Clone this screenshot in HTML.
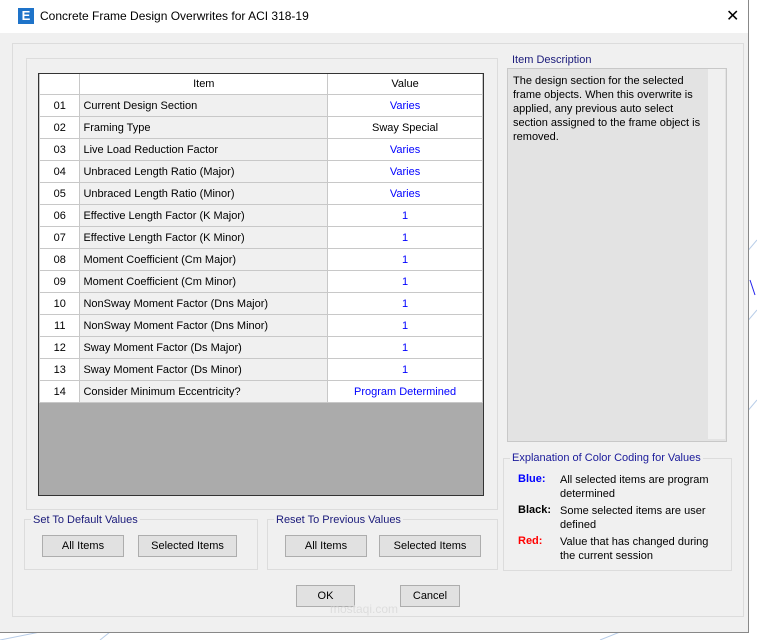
<!DOCTYPE html><html><head><style>
body{margin:0;width:757px;height:640px;overflow:hidden;background:#fff;font-family:"Liberation Sans",sans-serif;font-size:11px;position:relative}
.a{position:absolute}
.dlg{left:0;top:0;width:748px;height:632px;background:#f0f0f0;border-right:1px solid #888;border-bottom:1px solid #888}
.title{left:0;top:0;width:748px;height:33px;background:#fff}
.grp{border:1px solid #dcdcdc}
.btn{background:#e1e1e1;border:1px solid #adadad;text-align:center;line-height:20px;font-size:11px;height:20px}
table{border-collapse:collapse;font-size:11px}
td{border:1px solid #c8c8c8;height:21px;padding:0 3px;white-space:nowrap}
td.n{text-align:center;background:#fff;width:34px}
td.i{background:#f0f0f0;width:242px}
td.v{text-align:center;background:#fff;width:149px}
.b{color:#00f}
.lbl{background:#f0f0f0;padding:0 2px;font-size:11px}
</style></head><body>
<svg class="a" style="left:0;top:0" width="757" height="640"><g stroke="#b8cde8" stroke-width="1"><line x1="740" y1="260" x2="757" y2="240"/><line x1="740" y1="330" x2="757" y2="310"/><line x1="740" y1="420" x2="757" y2="400"/><line x1="0" y1="640" x2="40" y2="632"/><line x1="100" y1="640" x2="110" y2="632"/><line x1="600" y1="640" x2="620" y2="632"/></g><line x1="750" y1="280" x2="755" y2="295" stroke="#22e" /></svg>
<div class="a dlg"></div>
<div class="a title"></div>
<div class="a" style="left:18px;top:8px;width:16px;height:16px;background:#1e73c9;color:#fff;font-weight:bold;font-size:13px;text-align:center;line-height:16px">E</div>
<div class="a" style="left:40px;top:9px;font-size:12px;color:#000">Concrete Frame Design Overwrites for ACI 318-19</div>
<div class="a" style="left:726px;top:6px;font-size:16px">✕</div>
<div class="a grp" style="left:12px;top:43px;width:730px;height:572px"></div>
<div class="a grp" style="left:26px;top:58px;width:470px;height:450px"></div>
<div class="a" style="left:38px;top:73px;width:444px;height:421px;background:#ababab;border:1px solid #333;overflow:hidden">
<table style="margin-top:-2px">
<tr><td class="n"></td><td class="i" style="text-align:center;background:#fff">Item</td><td class="v" style="color:#000">Value</td></tr>
<tr><td class="n">01</td><td class="i">Current Design Section</td><td class="v b">Varies</td></tr>
<tr><td class="n">02</td><td class="i">Framing Type</td><td class="v">Sway Special</td></tr>
<tr><td class="n">03</td><td class="i">Live Load Reduction Factor</td><td class="v b">Varies</td></tr>
<tr><td class="n">04</td><td class="i">Unbraced Length Ratio (Major)</td><td class="v b">Varies</td></tr>
<tr><td class="n">05</td><td class="i">Unbraced Length Ratio (Minor)</td><td class="v b">Varies</td></tr>
<tr><td class="n">06</td><td class="i">Effective Length Factor (K Major)</td><td class="v b">1</td></tr>
<tr><td class="n">07</td><td class="i">Effective Length Factor (K Minor)</td><td class="v b">1</td></tr>
<tr><td class="n">08</td><td class="i">Moment Coefficient (Cm Major)</td><td class="v b">1</td></tr>
<tr><td class="n">09</td><td class="i">Moment Coefficient (Cm Minor)</td><td class="v b">1</td></tr>
<tr><td class="n">10</td><td class="i">NonSway Moment Factor (Dns Major)</td><td class="v b">1</td></tr>
<tr><td class="n">11</td><td class="i">NonSway Moment Factor (Dns Minor)</td><td class="v b">1</td></tr>
<tr><td class="n">12</td><td class="i">Sway Moment Factor (Ds Major)</td><td class="v b">1</td></tr>
<tr><td class="n">13</td><td class="i">Sway Moment Factor (Ds Minor)</td><td class="v b">1</td></tr>
<tr><td class="n">14</td><td class="i">Consider Minimum Eccentricity?</td><td class="v b">Program Determined</td></tr>
</table></div>
<div class="a" style="left:512px;top:54px;color:#1a1a7a">Item Description</div>
<div class="a" style="left:507px;top:68px;width:218px;height:372px;background:#e3e3e3;border:1px solid #c8c8c8"></div>
<div class="a" style="left:708px;top:69px;width:17px;height:370px;background:#f0f0f0"></div>
<div class="a" style="left:513px;top:74px;width:195px;line-height:14px">The design section for the selected frame objects.  When this overwrite is applied, any previous auto select section assigned to the frame object is removed.</div>
<div class="a grp" style="left:503px;top:458px;width:227px;height:111px"></div>
<div class="a lbl" style="left:510px;top:452px;color:#1a1a9a">Explanation of Color Coding for Values</div>
<div class="a" style="left:518px;top:473px;color:#00f;font-weight:bold">Blue:</div>
<div class="a" style="left:560px;top:473px;line-height:14px;width:160px">All selected items are program determined</div>
<div class="a" style="left:518px;top:504px;font-weight:bold">Black:</div>
<div class="a" style="left:560px;top:504px;line-height:14px;width:160px">Some selected items are user defined</div>
<div class="a" style="left:518px;top:535px;color:#f00;font-weight:bold">Red:</div>
<div class="a" style="left:560px;top:535px;line-height:14px;width:160px">Value that has changed during the current session</div>
<div class="a grp" style="left:24px;top:519px;width:232px;height:49px"></div>
<div class="a lbl" style="left:31px;top:514px;color:#1a1a7a">Set To Default Values</div>
<div class="a btn" style="left:42px;top:535px;width:80px">All Items</div>
<div class="a btn" style="left:138px;top:535px;width:97px">Selected Items</div>
<div class="a grp" style="left:267px;top:519px;width:229px;height:49px"></div>
<div class="a lbl" style="left:274px;top:514px;color:#1a1a7a">Reset To Previous Values</div>
<div class="a btn" style="left:285px;top:535px;width:80px">All Items</div>
<div class="a btn" style="left:379px;top:535px;width:100px">Selected Items</div>
<div class="a btn" style="left:296px;top:585px;width:57px">OK</div>
<div class="a btn" style="left:400px;top:585px;width:58px">Cancel</div>
<div class="a" style="left:330px;top:602px;color:#ddd;font-size:12px">mostaqi.com</div>
</body></html>
